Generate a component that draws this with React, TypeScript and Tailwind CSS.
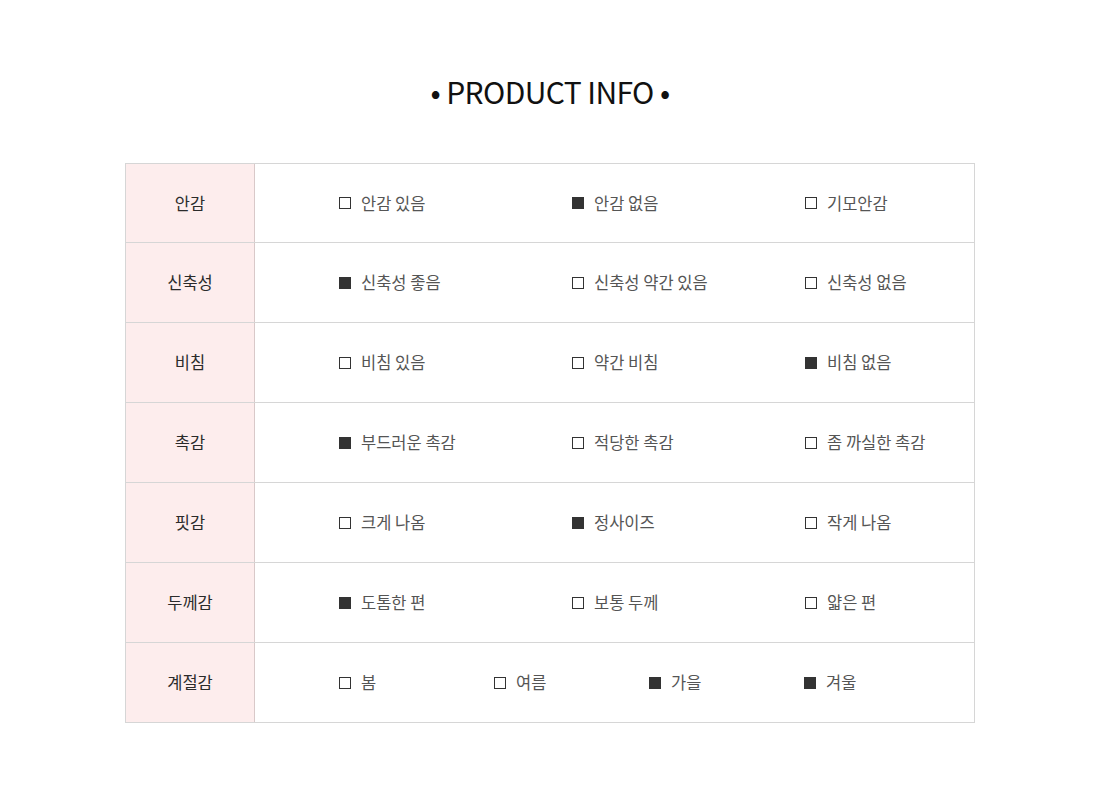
import React from "react";

type Opt = { label: string; on: boolean };

const rows: { title: string; opts: Opt[] }[] = [
  {
    title: "안감",
    opts: [
      { label: "안감 있음", on: false },
      { label: "안감 없음", on: true },
      { label: "기모안감", on: false },
    ],
  },
  {
    title: "신축성",
    opts: [
      { label: "신축성 좋음", on: true },
      { label: "신축성 약간 있음", on: false },
      { label: "신축성 없음", on: false },
    ],
  },
  {
    title: "비침",
    opts: [
      { label: "비침 있음", on: false },
      { label: "약간 비침", on: false },
      { label: "비침 없음", on: true },
    ],
  },
  {
    title: "촉감",
    opts: [
      { label: "부드러운 촉감", on: true },
      { label: "적당한 촉감", on: false },
      { label: "좀 까실한 촉감", on: false },
    ],
  },
  {
    title: "핏감",
    opts: [
      { label: "크게 나옴", on: false },
      { label: "정사이즈", on: true },
      { label: "작게 나옴", on: false },
    ],
  },
  {
    title: "두께감",
    opts: [
      { label: "도톰한 편", on: true },
      { label: "보통 두께", on: false },
      { label: "얇은 편", on: false },
    ],
  },
  {
    title: "계절감",
    opts: [
      { label: "봄", on: false },
      { label: "여름", on: false },
      { label: "가을", on: true },
      { label: "겨울", on: true },
    ],
  },
];

const Box = ({ on }: { on: boolean }) => (
  <span
    className={
      on
        ? "inline-block w-[12px] h-[12px] bg-[#333]"
        : "inline-block w-[12px] h-[12px] border border-[#333] bg-white"
    }
  />
);

export default function App() {
  return (
    <div
      className="w-[1100px] h-[800px] bg-white flex flex-col items-center"
      style={{ fontFamily: '"Noto Sans CJK KR", "Noto Sans", sans-serif' }}
    >
      {/* Title */}
      <h1 className="mt-[68px] h-[46px] text-[30px] leading-[46px] text-[#111] tracking-[-0.6px]">
        • PRODUCT INFO •
      </h1>

      {/* Info table */}
      <div className="mt-[49px] w-[850px] border border-[#d6d6d6] flex flex-col">
        {rows.map((row, i) => (
          <div
            key={row.title}
            className={
              i === 0
                ? "flex h-[79px] border-b border-[#d6d6d6]"
                : i < rows.length - 1
                ? "flex h-[80px] border-b border-[#d6d6d6]"
                : "flex h-[79px]"
            }
          >
            <div className="w-[129px] shrink-0 bg-[#fdeded] border-r border-[#d9c9c9] flex items-center justify-center text-[16.5px] text-[#2b2b2b]">
              {row.title}
            </div>
            <div className="flex-1 flex items-center pl-[84px]">
              {row.opts.map((o) => (
                <div
                  key={o.label}
                  className={
                    row.opts.length === 4
                      ? "w-[155px] flex items-center gap-[10px]"
                      : "w-[233px] flex items-center gap-[10px]"
                  }
                >
                  <Box on={o.on} />
                  <span className="text-[16.5px] text-[#555] leading-none">{o.label}</span>
                </div>
              ))}
            </div>
          </div>
        ))}
      </div>
    </div>
  );
}
